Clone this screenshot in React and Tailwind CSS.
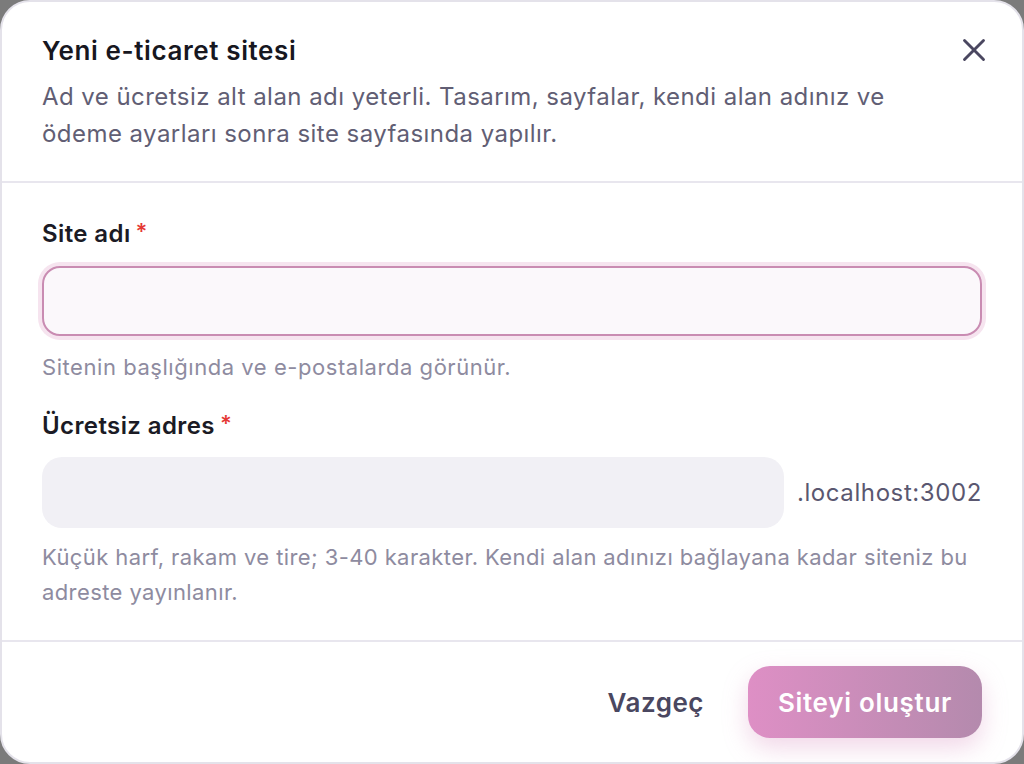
import React, { useState } from "react";
import { X } from "lucide-react";

const font = { fontFamily: "Inter, 'Noto Sans', sans-serif" };

const App = () => {
  const [name, setName] = useState("");
  const [slug, setSlug] = useState("");

  return (
    <div className="w-[1024px] h-[764px] bg-[#7b7b7b]" style={font}>
      <div className="h-full rounded-[30px] border-2 border-[#e4e2ea] bg-white flex flex-col overflow-hidden">
        {/* header */}
        <div className="relative border-b-2 border-[#e8e6ee] px-[40px] pt-[32px] pb-[29px]">
          <h2 className="text-[26px] leading-[34px] font-semibold text-[#17171f] tracking-[0.6px]">
            Yeni e-ticaret sitesi
          </h2>
          <p className="mt-[10px] max-w-[850px] text-[24px] leading-[37px] text-[#615e74] tracking-[0.45px]">
            Ad ve ücretsiz alt alan adı yeterli. Tasarım, sayfalar, kendi alan
            adınız ve ödeme ayarları sonra site sayfasında yapılır.
          </p>
          <button
            className="absolute right-[29px] top-[29px] text-[#4a4760]"
            aria-label="Kapat"
          >
            <X className="w-[38px] h-[38px]" strokeWidth={1.8} />
          </button>
        </div>

        {/* body */}
        <div className="flex-1 px-[40px] pt-[35px]">
          <label className="flex items-start gap-[5px] text-[24px] leading-[32px] font-semibold text-[#1b1b25] tracking-[0.4px]">
            Site adı
            <span className="text-[#e53935] text-[22px] leading-[26px]">*</span>
          </label>
          <input
            value={name}
            onChange={(e) => setName(e.target.value)}
            className="mt-[16px] block w-full h-[70px] rounded-[18px] border-2 border-[#c98cb2] bg-[#fbf8fb] px-5 text-[22px] outline-none ring-4 ring-[#f6e4ef]"
          />
          <p className="mt-[16px] text-[22px] leading-[30px] text-[#8e8ba0] tracking-[0.55px]">
            Sitenin başlığında ve e-postalarda görünür.
          </p>

          <label className="mt-[28px] flex items-start gap-[5px] text-[24px] leading-[32px] font-semibold text-[#1b1b25] tracking-[0.4px]">
            Ücretsiz adres
            <span className="text-[#e53935] text-[22px] leading-[26px]">*</span>
          </label>
          <div className="mt-[15px] flex items-center gap-[13px]">
            <input
              value={slug}
              onChange={(e) => setSlug(e.target.value)}
              className="flex-1 min-w-0 h-[71px] rounded-[20px] bg-[#f1f0f5] px-5 text-[22px] outline-none"
            />
            <span className="text-[24px] text-[#5a5770] tracking-[0.6px]">.localhost:3002</span>
          </div>
          <p className="mt-[12px] text-[22px] leading-[35px] text-[#8e8ba0] tracking-[0.4px]">
            Küçük harf, rakam ve tire; 3-40 karakter. Kendi alan adınızı
            bağlayana kadar siteniz bu adreste yayınlanır.
          </p>
        </div>

        {/* footer */}
        <div className="border-t-2 border-[#e8e6ee] px-[40px] pt-[24px] pb-[24px] flex items-center justify-end gap-[44px]">
          <button className="text-[26px] font-semibold text-[#4a4760] tracking-[0.5px]">
            Vazgeç
          </button>
          <button className="h-[72px] w-[234px] rounded-[22px] bg-gradient-to-r from-[#de8fc5] to-[#b48aad] text-[26px] font-semibold text-white tracking-[0.7px] shadow-[0_10px_24px_rgba(214,140,190,0.35)]">
            Siteyi oluştur
          </button>
        </div>
      </div>
    </div>
  );
};

export default App;
